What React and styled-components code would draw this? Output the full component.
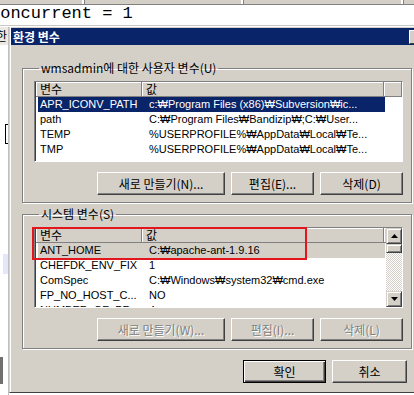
import styled, { createGlobalStyle } from 'styled-components'

const GlobalStyle = createGlobalStyle`
  html, body { margin: 0; padding: 0; background: #fff; overflow: hidden; }
  * { box-sizing: border-box; }
`

const userVars = [
  { name: 'APR_ICONV_PATH', value: 'c:₩Program Files (x86)₩Subversion₩ic...' },
  { name: 'path', value: 'C:₩Program Files₩Bandizip₩;C:₩User...' },
  { name: 'TEMP', value: '%USERPROFILE%₩AppData₩Local₩Te...' },
  { name: 'TMP', value: '%USERPROFILE%₩AppData₩Local₩Te...' },
]

const systemVars = [
  { name: 'ANT_HOME', value: 'C:₩apache-ant-1.9.16' },
  { name: 'CHEFDK_ENV_FIX', value: '1' },
  { name: 'ComSpec', value: 'C:₩Windows₩system32₩cmd.exe' },
  { name: 'FP_NO_HOST_C...', value: 'NO' },
  { name: 'NUMBER_OF_PR...', value: '4' },
]

function Arrow({ down }) {
  return (
    <svg width="7" height="4" viewBox="0 0 7 4">
      <path d={down ? 'M0 0h7L3.5 4z' : 'M0 4h7L3.5 0z'} fill="#000" />
    </svg>
  )
}

function VarList({ rows, selected, focused, scroll, marked }) {
  return (
    <ListBox>
      <ListMain>
        <Header>
          <HeadCell>변수</HeadCell>
          <HeadCell>값</HeadCell>
          <HeadCell />
        </Header>
        {rows.map((r, i) => (
          <Row key={r.name} $sel={i === selected} $focused={focused}>
            <Cell>{r.name}</Cell>
            <Cell $value>{r.value}</Cell>
          </Row>
        ))}
      </ListMain>
      {scroll && (
        <Scrollbar>
          <ScrollBtn><Arrow /></ScrollBtn>
          <Thumb />
          <Track />
          <ScrollBtn><Arrow down /></ScrollBtn>
        </Scrollbar>
      )}
      {marked && <Mark />}
    </ListBox>
  )
}

export default function App() {
  return (
    <>
      <GlobalStyle />
      <Page>
        <TopStrip>
          <Pane $w={85} />
          <Pane $w={159} />
          <Pane $w={160} />
        </TopStrip>
        <Editor>concurrent = 1</Editor>
        <Main>
          <LeftStrip>
            <Glyph>한</Glyph>
            <Bracket />
            <Patch />
            <DarkBlock />
          </LeftStrip>
          <Dialog>
            <TitleBar>
              <Title>환경 변수</Title>
              <CloseBtn />
            </TitleBar>
            <Body>
              <Group>
                <Legend>wmsadmin에 대한 사용자 변수(U)</Legend>
                <VarList rows={userVars} selected={0} focused />
                <ButtonRow>
                  <Button $w={128}>새로 만들기(N)...</Button>
                  <Button $w={83}>편집(E)...</Button>
                  <Button $w={83}>삭제(D)</Button>
                </ButtonRow>
              </Group>
              <Group $second>
                <Legend>시스템 변수(S)</Legend>
                <VarList rows={systemVars} selected={0} scroll marked />
                <ButtonRow>
                  <Button $w={128} disabled>새로 만들기(W)...</Button>
                  <Button $w={83} disabled>편집(I)...</Button>
                  <Button $w={83} disabled>삭제(L)</Button>
                </ButtonRow>
              </Group>
              <FooterRow>
                <Button $w={83} $default>확인</Button>
                <Button $w={75}>취소</Button>
              </FooterRow>
            </Body>
          </Dialog>
        </Main>
      </Page>
    </>
  )
}

const Page = styled.div`
  width: 414px;
  height: 395px;
  overflow: hidden;
  display: flex;
  flex-direction: column;
  background: #fff;
  font-family: "Noto Sans CJK KR", "Liberation Sans", sans-serif;
  font-size: 12px;
`
const TopStrip = styled.div`
  height: 5px;
  flex: none;
  display: flex;
  background: #d4d0c8;
  border-bottom: 1px solid #808080;
`
const Pane = styled.div`
  width: ${p => p.$w}px;
  border-right: 1px solid #808080;
  box-shadow: inset -2px 0 0 #fff;
`
const Editor = styled.div`
  height: 21px;
  flex: none;
  font-family: "Liberation Mono", monospace;
  font-size: 17px;
  line-height: 18px;
  white-space: pre;
  text-indent: -10px;
  color: #000;
  overflow: hidden;
  border-bottom: 1px solid #c8c8c8;
`
const Main = styled.div`
  flex: 1;
  display: flex;
  margin-top: 1px;
  min-height: 0;
`
const LeftStrip = styled.div`
  width: 9px;
  flex: none;
  display: flex;
  flex-direction: column;
  background: #fff;
  border-right: 1px solid #c0c0c0;
`
const Glyph = styled.div`
  height: 18px;
  width: 8px;
  overflow: hidden;
  font-size: 12px;
  line-height: 18px;
  text-indent: -4px;
  background: #ece9e2;
`
const Bracket = styled.div`
  width: 3px;
  height: 20px;
  margin: 79px 0 0 5px;
  border: 1px solid #000;
  border-right: none;
`
const Patch = styled.div`
  width: 5px;
  height: 20px;
  margin: 110px 0 0 3px;
  background: #e6e6fa;
`
const DarkBlock = styled.div`
  width: 3px;
  height: 27px;
  margin-top: 83px;
  background: #707070;
`
const Dialog = styled.div`
  width: 418px;
  height: 366px;
  flex: none;
  display: flex;
  flex-direction: column;
  background: #d4d0c8;
  border-left: 1px solid #d4d0c8;
  border-bottom: 1px solid #404040;
  box-shadow: inset 1px 0 0 #fff;
`
const TitleBar = styled.div`
  height: 17px;
  margin: 1px 0 0 1px;
  display: flex;
  align-items: center;
  background: #0a246a;
`
const Title = styled.div`
  flex: 1;
  padding-left: 2px;
  color: #fff;
  font-weight: bold;
  font-size: 12px;
  line-height: 17px;
`
const CloseBtn = styled.div`
  width: 16px;
  height: 14px;
  margin-right: 2px;
  background: #d4d0c8;
  border: 1px solid;
  border-color: #fff #404040 #404040 #fff;
`
const Body = styled.div`
  flex: 1;
  display: flex;
  flex-direction: column;
  padding: 16px 15px 0 12px;
`
const Group = styled.fieldset`
  margin: ${p => (p.$second ? '4px' : '0')} 0 0 0;
  padding: 6px 8px 7px 11px;
  border: 1px solid #808080;
  box-shadow: inset 1px 1px 0 #fff, 1px 1px 0 #fff;
  display: flex;
  flex-direction: column;
  min-width: 0;
`
const Legend = styled.legend`
  margin-left: 5px;
  padding: 0 2px;
  font-size: 12px;
  line-height: 14px;
  color: #000;
`
const ListBox = styled.div`
  position: relative;
  height: 81px;
  display: flex;
  background: #fff;
  border: 1px solid;
  border-color: #808080 #fff #fff #808080;
  box-shadow: inset 1px 1px 0 #404040;
  overflow: visible;
`
const ListMain = styled.div`
  flex: 1;
  min-width: 0;
  overflow: hidden;
  padding-left: 1px;
`
const Header = styled.div`
  display: grid;
  grid-template-columns: 106px 242px 1fr;
  height: 15px;
`
const HeadCell = styled.div`
  background: #d4d0c8;
  border-right: 1px solid #808080;
  border-bottom: 1px solid #808080;
  box-shadow: inset 1px 1px 0 #fff;
  padding-left: 4px;
  font-size: 12px;
  line-height: 14px;
  color: #000;
`
const Row = styled.div`
  display: grid;
  grid-template-columns: 107px 1fr;
  height: 15px;
  margin-left: 2px;
  width: 347px;
  background: ${p => (p.$sel ? (p.$focused ? '#0a246a' : '#d4d0c8') : 'transparent')};
  color: ${p => (p.$sel && p.$focused ? '#fff' : '#000')};
  font-family: "Liberation Sans", "Noto Sans CJK KR", sans-serif;
  font-size: 11px;
  line-height: 15px;
  white-space: nowrap;
`
const Cell = styled.div`
  padding-left: ${p => (p.$value ? '4px' : '2px')};
  overflow: hidden;
`
const Scrollbar = styled.div`
  width: 16px;
  flex: none;
  display: flex;
  flex-direction: column;
`
const raised = `
  background: #d4d0c8;
  border: 1px solid;
  border-color: #d4d0c8 #404040 #404040 #d4d0c8;
  box-shadow: inset 1px 1px 0 #fff, inset -1px -1px 0 #808080;
`
const ScrollBtn = styled.div`
  height: 16px;
  flex: none;
  display: flex;
  align-items: center;
  justify-content: center;
  ${raised}
`
const Thumb = styled.div`
  height: 9px;
  flex: none;
  ${raised}
`
const Track = styled.div`
  flex: 1;
  background: repeating-conic-gradient(#d4d0c8 0 25%, #fff 0 50%) 0 0 / 2px 2px;
`
const Mark = styled.div`
  position: absolute;
  left: -3px;
  top: -1px;
  width: 275px;
  height: 33px;
  border: 2px solid #e3161e;
  pointer-events: none;
`
const ButtonRow = styled.div`
  display: flex;
  justify-content: flex-end;
  gap: 6px;
  margin-top: 10px;
`
const FooterRow = styled.div`
  display: flex;
  justify-content: flex-end;
  gap: 6px;
  margin-top: 11px;
  margin-right: 5px;
`
const Button = styled.button`
  width: ${p => p.$w}px;
  height: 23px;
  padding: 0;
  font-family: "Noto Sans CJK KR", "Liberation Sans", sans-serif;
  font-size: 12px;
  line-height: 20px;
  color: #000;
  background: #d4d0c8;
  border: 1px solid;
  border-color: ${p => (p.$default ? '#000' : '#fff #404040 #404040 #fff')};
  box-shadow: ${p =>
    p.$default
      ? 'inset 1px 1px 0 #fff, inset -1px -1px 0 #404040, inset -2px -2px 0 #808080'
      : 'inset -1px -1px 0 #808080'};
  &:disabled {
    color: #808080;
    text-shadow: 1px 1px 0 #fff;
  }
`
